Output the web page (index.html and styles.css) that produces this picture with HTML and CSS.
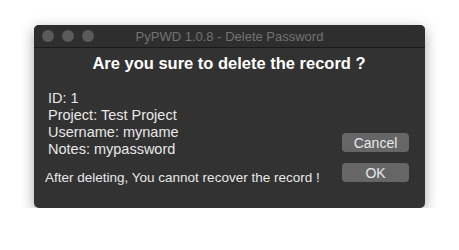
FILE: index.html
```html
<!DOCTYPE html>
<html lang="en">
<head>
    <meta charset="UTF-8">
    <meta name="viewport" content="width=device-width, initial-scale=1.0">
    <title>PyPWD 1.0.8 - Delete Password</title>
    <link rel="stylesheet" href="styles.css">
</head>
<body>
    <div class="window">
        <div class="titlebar">
            <div class="lights">
                <span class="light"></span>
                <span class="light"></span>
                <span class="light"></span>
            </div>
            <div class="title">PyPWD 1.0.8 - Delete Password</div>
        </div>
        <div class="content">
            <h1>Are you sure to delete the record ?</h1>
            <div class="main">
                <div class="details">
                    <div class="record">
                        <div>ID: 1</div>
                        <div>Project: Test Project</div>
                        <div>Username: myname</div>
                        <div>Notes: mypassword</div>
                    </div>
                    <div class="warning">After deleting, You cannot recover the record !</div>
                </div>
                <div class="buttons">
                    <button type="button">Cancel</button>
                    <button type="button">OK</button>
                </div>
            </div>
        </div>
    </div>
</body>
</html>
```
FILE: styles.css
```css
body {
    font-family: 'Liberation Sans', Arial, sans-serif;
    background-color: #ffffff;
    margin: 0;
    padding: 25px 0 0 34px;
}
.window {
    width: 391px;
    height: 183px;
    background: #323232;
    border-radius: 5px;
    box-shadow: 0 4px 14px rgba(0,0,0,0.35);
    overflow: hidden;
    color: #e8e8e8;
}
.titlebar {
    height: 22px;
    background: #2e2e2e;
    border-bottom: 1px solid #1a1a1a;
    display: flex;
    align-items: center;
}
.lights {
    display: flex;
    gap: 8px;
    padding-left: 8px;
}
.light {
    width: 12px;
    height: 12px;
    border-radius: 50%;
    background: #5a5a5a;
}
.title {
    flex: 1;
    text-align: center;
    color: #727272;
    font-size: 13px;
    margin-right: 60px;
}
.content {
    padding: 4px 16px 0 13px;
}
h1 {
    margin: 0;
    text-align: center;
    font-size: 16.5px;
    font-weight: bold;
    color: #ffffff;
    line-height: 22px;
    padding-left: 2px;
}
.main {
    display: flex;
    justify-content: space-between;
    margin-top: 16px;
}
.record {
    padding-left: 1px;
    font-size: 14.5px;
    line-height: 17px;
}
.warning {
    margin-top: 12px;
    margin-left: -2px;
    font-size: 13.5px;
}
.buttons {
    display: flex;
    flex-direction: column;
    gap: 11px;
    padding-top: 43px;
}
button {
    width: 67px;
    height: 19px;
    border: none;
    border-radius: 4px;
    background: #666666;
    color: #e8e8e8;
    font-family: inherit;
    font-size: 14px;
    padding: 0;
}
```
